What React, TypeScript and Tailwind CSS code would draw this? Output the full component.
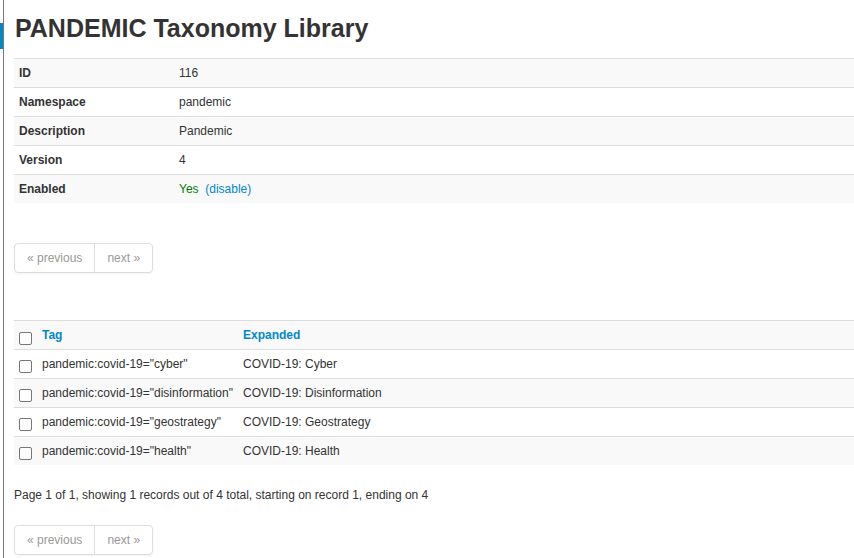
import React from "react";

const font = { fontFamily: '"Liberation Sans", Arial, sans-serif' };

function Box({ mt }: { mt: string }) {
  return (
    <span
      className={`block w-[13px] h-[13px] border border-[#767676] rounded-[2px] bg-white ${mt}`}
    />
  );
}

function Pager() {
  return (
    <div className="flex">
      <div className="flex whitespace-nowrap border border-[#dddddd] rounded-[4px] shadow-[0_1px_2px_rgba(0,0,0,0.05)] text-[#999999] text-[12px] leading-[20px]">
        <span className="px-[12px] py-[4px] border-r border-[#dddddd]">« previous</span>
        <span className="px-[12px] py-[4px]">next »</span>
      </div>
    </div>
  );
}

export default function App() {
  const info: [string, React.ReactNode][] = [
    ["ID", "116"],
    ["Namespace", "pandemic"],
    ["Description", "Pandemic"],
    ["Version", "4"],
    [
      "Enabled",
      <span>
        <span className="text-[#008000]">Yes</span>
        <span className="text-[#0088cc]">&nbsp;&nbsp;(disable)</span>
      </span>,
    ],
  ];
  const tags: [string, string][] = [
    ['pandemic:covid-19="cyber"', "COVID-19: Cyber"],
    ['pandemic:covid-19="disinformation"', "COVID-19: Disinformation"],
    ['pandemic:covid-19="geostrategy"', "COVID-19: Geostrategy"],
    ['pandemic:covid-19="health"', "COVID-19: Health"],
  ];
  return (
    <div className="flex min-h-[558px] bg-white text-[#333333] text-[12px] leading-[20px]" style={font}>
      <div className="w-[4px] shrink-0 border-r border-[#777777]">
        <div className="h-[23px]" />
        <div className="h-[26px] w-[3px] bg-[#0088cc]" />
      </div>
      <div className="flex-1 pl-[10px]">
        <h2 className="text-[25px] leading-[30px] font-bold text-[#333333] pt-[13px] pb-[15px] pl-[1px]">
          PANDEMIC Taxonomy Library
        </h2>
        <table className="w-full border-collapse">
          <tbody>
            {info.map(([k, v], i) => (
              <tr key={k} className={i % 2 === 0 ? "bg-[#f9f9f9]" : "bg-white"}>
                <td className="w-[160px] border-t border-[#dddddd] px-[5px] py-[4px] font-bold align-top">{k}</td>
                <td className="border-t border-[#dddddd] px-[5px] py-[4px] align-top">{v}</td>
              </tr>
            ))}
          </tbody>
        </table>
        <div className="h-[40px]" />
        <Pager />
        <div className="h-[47px]" />
        <table className="w-full border-collapse">
          <tbody>
            <tr className="bg-[#f9f9f9]">
              <td className="w-[23px] border-t border-[#dddddd] px-[5px] py-[4px] align-top">
                <Box mt="mt-[7px]" />
              </td>
              <td className="border-t border-[#dddddd] px-[5px] py-[4px] font-bold text-[#0088cc] whitespace-nowrap align-top">Tag</td>
              <td className="border-t border-[#dddddd] px-[5px] py-[4px] font-bold text-[#0088cc] align-top">Expanded</td>
            </tr>
            {tags.map(([t, e], i) => (
              <tr key={t} className={i % 2 === 1 ? "bg-[#f9f9f9]" : "bg-white"}>
                <td className="w-[23px] border-t border-[#dddddd] px-[5px] py-[4px] align-top">
                  <Box mt="mt-[6px]" />
                </td>
                <td className="w-[201px] border-t border-[#dddddd] px-[5px] py-[4px] whitespace-nowrap align-top">{t}</td>
                <td className="border-t border-[#dddddd] px-[5px] py-[4px] align-top">{e}</td>
              </tr>
            ))}
          </tbody>
        </table>
        <p className="mt-[20px] mb-[20px]">
          Page 1 of 1, showing 1 records out of 4 total, starting on record 1, ending on 4
        </p>
        <Pager />
      </div>
    </div>
  );
}
